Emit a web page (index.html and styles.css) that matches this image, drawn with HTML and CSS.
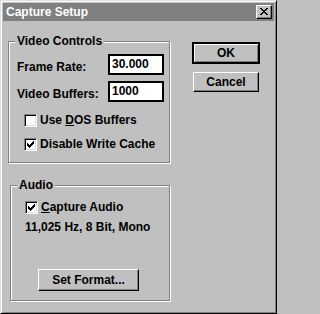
FILE: index.html
```html
<!DOCTYPE html>
<html>
<head>
<meta charset="utf-8">
<title>Capture Setup</title>
<link rel="stylesheet" href="styles.css">
</head>
<body>
<div class="window">
  <div class="titlebar">
    <span class="title">Capture Setup</span>
    <span class="close"><svg width="8" height="7" viewBox="0 0 8 7" shape-rendering="crispEdges"><path d="M0 0h2v1H0zM6 0h2v1H6zM1 1h2v1H1zM5 1h2v1H5zM2 2h4v1H2zM3 3h2v1H3zM2 4h4v1H2zM1 5h2v1H1zM5 5h2v1H5zM0 6h2v1H0zM6 6h2v1H6z" fill="#000"/></svg></span>
  </div>
  <div class="main">
    <div class="left">
      <fieldset class="group video">
        <legend>Video Controls</legend>
        <div class="field"><span class="lbl">Frame Rate:</span><span class="edit">30.000</span></div>
        <div class="field second"><span class="lbl">Video Buffers:</span><span class="edit">1000</span></div>
        <div class="check first"><span class="box"></span><span class="ctext">Use <u>D</u>OS Buffers</span></div>
        <div class="check"><span class="box"><svg width="7" height="7" viewBox="0 0 7 7" shape-rendering="crispEdges"><path d="M6 0h1v3H6zM5 1h1v3H5zM4 2h1v3H4zM0 2h1v3H0zM1 3h1v3H1zM2 4h1v3H2zM3 3h1v3H3z" fill="#000"/></svg></span><span class="ctext">Disable Write Cache</span></div>
      </fieldset>
      <fieldset class="group audio">
        <legend>Audio</legend>
        <div class="check"><span class="box"><svg width="7" height="7" viewBox="0 0 7 7" shape-rendering="crispEdges"><path d="M6 0h1v3H6zM5 1h1v3H5zM4 2h1v3H4zM0 2h1v3H0zM1 3h1v3H1zM2 4h1v3H2zM3 3h1v3H3z" fill="#000"/></svg></span><span class="ctext"><u>C</u>apture Audio</span></div>
        <div class="format">11,025 Hz, 8 Bit, Mono</div>
        <div class="btn setfmt">Set Format...</div>
      </fieldset>
    </div>
    <div class="right">
      <div class="btn default">OK</div>
      <div class="btn cancel">Cancel</div>
    </div>
  </div>
</div>
</body>
</html>
```

FILE: styles.css
```css
html, body {
  margin: 0;
  padding: 0;
  background: #c0c0c0;
}

body {
  font-family: "Liberation Sans", Arial, sans-serif;
  font-size: 12px;
  font-weight: bold;
  color: #000;
  line-height: 13px;
}

.window {
  box-sizing: border-box;
  width: 277px;
  height: 314px;
  background: #c0c0c0;
  border: 1px solid;
  border-color: #dfdfdf #000 #000 #dfdfdf;
  box-shadow: inset 1px 1px #fff, inset -1px -1px #808080;
  padding: 2px;
}

.titlebar {
  height: 18px;
  background: #808080;
  color: #fff;
  display: flex;
  align-items: center;
  justify-content: space-between;
  padding: 0 2px 0 3px;
}

.title {
  line-height: 18px;
}

.close {
  box-sizing: border-box;
  width: 16px;
  height: 14px;
  background: #c0c0c0;
  border: 1px solid;
  border-color: #fff #000 #000 #fff;
  box-shadow: inset -1px -1px #808080;
  display: flex;
  align-items: center;
  justify-content: center;
  padding: 0 1px 1px 0;
}

.close svg, .box svg {
  display: block;
}

.main {
  display: flex;
  padding-left: 5px;
  gap: 22px;
}

.left {
  width: 162px;
  padding-top: 14px;
}

.group {
  box-sizing: border-box;
  margin: 0;
  min-width: 0;
  border: 1px solid #808080;
  box-shadow: inset 1px 1px #fff, 1px 1px #fff;
}

.group legend {
  padding: 0 2px;
  line-height: 13px;
  background: #c0c0c0;
}

.video {
  width: 162px;
  padding: 6px 0 11px 8px;
}

.video legend {
  margin-left: -2px;
}

.field {
  display: flex;
  align-items: flex-end;
}

.field.second {
  margin-top: 6px;
}

.lbl {
  width: 91px;
  flex: none;
  margin-bottom: 1px;
}

.edit {
  box-sizing: border-box;
  width: 56px;
  height: 21px;
  border: 2px solid #000;
  background: #fff;
  padding: 0 2px;
  display: flex;
  align-items: center;
}

.check {
  display: flex;
  align-items: center;
  margin-top: 11px;
}

.video .check {
  margin-left: 7px;
}

.video .check.first {
  margin-top: 12px;
}

.box {
  box-sizing: border-box;
  width: 13px;
  height: 13px;
  flex: none;
  background: #fff;
  border: 1px solid;
  border-color: #808080 #fff #fff #808080;
  box-shadow: inset 1px 1px #000, inset -1px -1px #dfdfdf;
  padding: 2px 0 0 2px;
}

.ctext {
  margin-left: 3px;
}

.audio {
  width: 160px;
  margin-left: 2px;
  margin-top: 16px;
  padding: 9px 0 9px 14px;
}

.audio legend {
  margin-left: -8px;
}

.audio .check {
  margin-top: 0;
}

.format {
  margin-top: 7px;
}

.btn {
  box-sizing: border-box;
  display: flex;
  align-items: center;
  justify-content: center;
  background: #c0c0c0;
  border: 1px solid;
  border-color: #fff #000 #000 #fff;
  box-shadow: inset -1px -1px #808080;
}

.setfmt {
  width: 101px;
  height: 22px;
  margin-top: 35px;
  margin-left: 13px;
}

.right {
  width: 68px;
  padding-top: 21px;
}

.default {
  width: 68px;
  height: 22px;
  border-color: #000;
  box-shadow: inset 1px 1px #000, inset -1px -1px #000, inset 2px 2px #fff, inset -2px -2px #808080;
}

.cancel {
  width: 66px;
  height: 20px;
  margin: 8px 0 0 1px;
}
```
